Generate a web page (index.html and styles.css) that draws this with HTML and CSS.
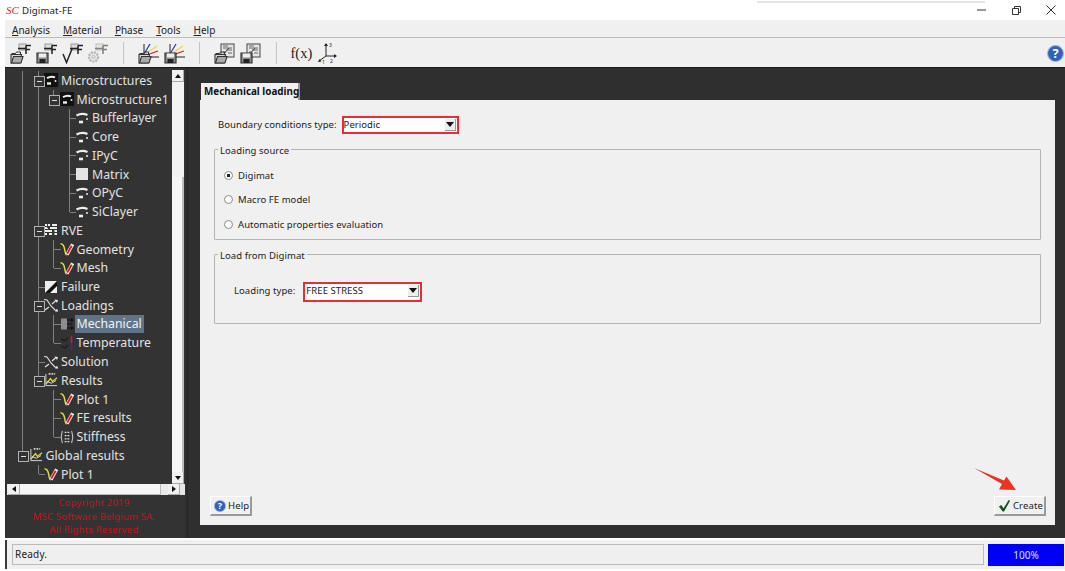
FILE: index.html
```html
<!DOCTYPE html>
<html lang="en">
<head>
<meta charset="utf-8">
<title>Digimat-FE</title>
<link rel="stylesheet" href="styles.css">
</head>
<body>
<svg class="defs" width="0" height="0" aria-hidden="true">
  <defs>
    <symbol id="i-ms" viewBox="0 0 14 14"><rect width="14" height="14" fill="#111"/><path d="M3 5.200Q7 2.600 11 4.400" stroke="#eee" stroke-width="2" fill="none"/><circle cx="11.500" cy="8" r="1" fill="#eee"/><path d="M3 10.500h4" stroke="#eee" stroke-width="2.400"/></symbol>
    <symbol id="i-ph" viewBox="0 0 14 14"><path d="M1.500 4.500Q7 1.600 12.500 4" stroke="#eee" stroke-width="2.200" fill="none"/><circle cx="12" cy="8" r="1" fill="#eee"/><path d="M4 11h4" stroke="#eee" stroke-width="2.600"/></symbol>
    <symbol id="i-mat" viewBox="0 0 14 14"><rect x="1" y="1" width="12" height="12" fill="#e4e4e4"/></symbol>
    <symbol id="i-rve" viewBox="0 0 14 14"><path d="M1 2h5M8 2h5M1 5h3M6 5h7M1 8h7M10 8h3M1 11h2M5 11h3M10 11h3" stroke="#eee" stroke-width="2"/><path d="M3.500 1v4M10 6v6" stroke="#444"/></symbol>
    <symbol id="i-v" viewBox="0 0 15 15"><path d="M0.500 2Q4 2 5 8T7 14" stroke="#e8d93a" stroke-width="1.600" fill="none"/><path d="M7.500 13.500L13.500 2.500" stroke="#f0f0f0" stroke-width="3.600"/><path d="M7.800 12.500L12.500 4" stroke="#e01818" stroke-width="2"/></symbol>
    <symbol id="i-fail" viewBox="0 0 14 14"><rect x="1" y="1" width="12" height="12" fill="#eee"/><path d="M1 13L13 1V6L6 13Z" fill="#111"/></symbol>
    <symbol id="i-load" viewBox="0 0 14 14"><path d="M0 1.500L3 2 7 8 11 12 14 13M1 12L5 9M8 6L12 2.500" stroke="#e6e6e6" stroke-width="1.100" fill="none"/><path d="M14 2L10.500 1.500 13 5ZM11 13.500L14 13.500 13 10.500Z" fill="#e6e6e6"/></symbol>
    <symbol id="i-mech" viewBox="0 0 14 14"><rect x="1" y="1.500" width="6" height="11" fill="#8d8d8d"/><path d="M7 3h5M7 7h5M7 11h5" stroke="#111" stroke-width="1"/><path d="M14 3l-3-2v4zM14 11l-3-2v4z" fill="#111"/></symbol>
    <symbol id="i-temp" viewBox="0 0 14 14"><path d="M1 3L5 5 8 2M1 10L5 12 8 9" stroke="#1a1a1a" stroke-width="1.200" fill="none"/><path d="M11.500 0v7" stroke="#d01a30" stroke-width="1.500"/><path d="M11.500 7v7" stroke="#5a1aa0" stroke-width="1.500"/></symbol>
    <symbol id="i-res" viewBox="0 0 15 15"><path d="M2 1V13.500H14" stroke="#ddd" fill="none"/><path d="M2 12L7 6 9 9 14 5" stroke="#e8d93a" stroke-width="1.400" fill="none"/><path d="M3 9L8 11 13 8" stroke="#ddd" fill="none"/><path d="M5 1h7" stroke="#ccc" stroke-dasharray="2 1" stroke-width="2"/></symbol>
    <symbol id="i-stiff" viewBox="0 0 15 15"><path d="M2.500 1Q0 7.500 2.500 14M12.500 1Q15 7.500 12.500 14" stroke="#ddd" fill="none"/><path d="M5 2.500h2M8 2.500h2M5 6h2M8 6h2M5 9.500h2M8 9.500h2M5 12.500h2M8 12.500h2" stroke="#ddd" stroke-width="1.400"/></symbol>
    <symbol id="t-open" viewBox="0 0 21 21"><path d="M1.500 10.500h4l1-1.500h4v2.500" fill="none" stroke="#333"/><path d="M1 20V11.500H11.500L10 20Z" fill="#d9d9d9" stroke="#333" stroke-width="1.100"/><path d="M3.500 13.500H13L11 20H1.500Z" fill="#aaa" stroke="#333" stroke-width="1.100"/></symbol>
    <symbol id="t-save" viewBox="0 0 21 21"><path d="M1 10H12V20H1Z" fill="#8c8c8c" stroke="#333" stroke-width="1.200"/><rect x="3" y="10.500" width="7" height="4" fill="#eee"/><rect x="3.500" y="16" width="6" height="4" fill="#222"/></symbol>
    <symbol id="t-fe" viewBox="0 0 21 21"><rect x="9" y="1" width="7" height="6" fill="#ddd" stroke="#999"/><path d="M16 2.500V11M16 2.500h5M16 6.500h4M8 5.500h8" stroke="#222" stroke-width="1.500" fill="none"/></symbol>
    <symbol id="t-check" viewBox="0 0 21 21"><path d="M1 11L4.500 19.500 10 6" stroke="#222" stroke-width="1.500" fill="none"/></symbol>
    <symbol id="t-gear" viewBox="0 0 21 21"><circle cx="6.500" cy="14" r="4.500" fill="none" stroke="#888" stroke-width="2.400" stroke-dasharray="2 1"/><circle cx="6.500" cy="14" r="1.700" fill="#ddd" stroke="#888"/></symbol>
    <symbol id="t-curves" viewBox="0 0 21 21"><path d="M6 1V14H21" stroke="#222" fill="none"/><path d="M6 11L12 1" stroke="#2b3cc0" stroke-width="1.300"/><path d="M6 12L19 3" stroke="#e8d93a" stroke-width="1.300"/><path d="M6 13L20 8" stroke="#d81c1c" stroke-width="1.300"/></symbol>
    <symbol id="t-grid" viewBox="0 0 21 21"><rect x="7" y="1" width="13" height="13" fill="#e6e6e6" stroke="#555" stroke-width="1.100"/><path d="M9 3h5M9 5h9M12 7h6M9 9h3M14 10h4" stroke="#666"/><path d="M9 12L15 5" stroke="#444"/></symbol>
    <symbol id="t-axes" viewBox="0 0 22 22"><path d="M10 14V3M10 14H20M10 14L3 19" stroke="#222" fill="none"/><path d="M10 1l-2 3h4zM21 14l-3-2v4zM2 20l3.500-.5-2-2.500z" fill="#222"/><text x="13" y="5" class="ax">3</text><text x="14" y="20.500" class="ax">2</text><text x="6" y="22" class="ax">1</text></symbol>
    <symbol id="i-help" viewBox="0 0 16 16"><circle cx="8" cy="8" r="7.500" fill="#2f62b8" stroke="#9db7de"/><text x="8" y="12.500" text-anchor="middle" class="qm">?</text></symbol>
  </defs>
</svg>

<header class="titlebar">
  <span class="logo">SC</span>
  <span class="app-title">Digimat-FE</span>
  <div class="winctl">
    <svg class="wc" viewBox="0 0 12 12"><path d="M2 6h9" stroke="#333"/></svg>
    <svg class="wc" viewBox="0 0 12 12"><path d="M2.500 4.500h6v6h-6zM4.500 4.500v-2h6v6h-2" stroke="#333" fill="none"/></svg>
    <svg class="wc" viewBox="0 0 12 12"><path d="M1.500 1.500l9 9M10.500 1.500l-9 9" stroke="#333"/></svg>
  </div>
</header>

<div class="app">
  <nav class="menubar">
    <span class="menu"><u>A</u>nalysis</span>
    <span class="menu"><u>M</u>aterial</span>
    <span class="menu"><u>P</u>hase</span>
    <span class="menu"><u>T</u>ools</span>
    <span class="menu"><u>H</u>elp</span>
  </nav>

  <div class="toolbar">
    <span class="tool"><svg><use href="#t-fe"/><use href="#t-open"/></svg></span>
    <span class="tool"><svg><use href="#t-fe"/><use href="#t-save"/></svg></span>
    <span class="tool"><svg><use href="#t-fe"/><use href="#t-check"/></svg></span>
    <span class="tool faded"><svg><use href="#t-fe"/><use href="#t-gear"/></svg></span>
    <span class="tsep"></span>
    <span class="tool"><svg><use href="#t-curves"/><use href="#t-open"/></svg></span>
    <span class="tool"><svg><use href="#t-curves"/><use href="#t-save"/></svg></span>
    <span class="tsep"></span>
    <span class="tool"><svg><use href="#t-grid"/><use href="#t-open"/></svg></span>
    <span class="tool"><svg><use href="#t-grid"/><use href="#t-save"/></svg></span>
    <span class="tsep"></span>
    <span class="tool fx">f(x)</span>
    <span class="tool"><svg class="axes" viewBox="0 0 22 22"><use href="#t-axes"/></svg></span>
    <svg class="tb-help"><use href="#i-help"/></svg>
  </div>

  <main class="workspace">
    <aside class="side">
      <div class="tree-wrap">
        <div class="tree">
          <div class="row"><i class="c on"></i><i class="c on exp"></i><svg class="ic"><use href="#i-ms"/></svg><span>Microstructures</span></div>
          <div class="row"><i class="c on"></i><i class="c on"></i><i class="c exp line-up"></i><svg class="ic"><use href="#i-ms"/></svg><span>Microstructure1</span></div>
          <div class="row"><i class="c on"></i><i class="c on"></i><i class="c"></i><i class="c tee"></i><svg class="ic"><use href="#i-ph"/></svg><span>Bufferlayer</span></div>
          <div class="row"><i class="c on"></i><i class="c on"></i><i class="c"></i><i class="c tee"></i><svg class="ic"><use href="#i-ph"/></svg><span>Core</span></div>
          <div class="row"><i class="c on"></i><i class="c on"></i><i class="c"></i><i class="c tee"></i><svg class="ic"><use href="#i-ph"/></svg><span>IPyC</span></div>
          <div class="row"><i class="c on"></i><i class="c on"></i><i class="c"></i><i class="c tee"></i><svg class="ic"><use href="#i-mat"/></svg><span>Matrix</span></div>
          <div class="row"><i class="c on"></i><i class="c on"></i><i class="c"></i><i class="c tee"></i><svg class="ic"><use href="#i-ph"/></svg><span>OPyC</span></div>
          <div class="row"><i class="c on"></i><i class="c on"></i><i class="c"></i><i class="c ell"></i><svg class="ic"><use href="#i-ph"/></svg><span>SiClayer</span></div>
          <div class="row"><i class="c on"></i><i class="c on exp"></i><svg class="ic"><use href="#i-rve"/></svg><span>RVE</span></div>
          <div class="row"><i class="c on"></i><i class="c on"></i><i class="c tee"></i><svg class="ic"><use href="#i-v"/></svg><span>Geometry</span></div>
          <div class="row"><i class="c on"></i><i class="c on"></i><i class="c ell"></i><svg class="ic"><use href="#i-v"/></svg><span>Mesh</span></div>
          <div class="row"><i class="c on"></i><i class="c tee"></i><svg class="ic"><use href="#i-fail"/></svg><span>Failure</span></div>
          <div class="row"><i class="c on"></i><i class="c on exp"></i><svg class="ic"><use href="#i-load"/></svg><span>Loadings</span></div>
          <div class="row"><i class="c on"></i><i class="c on"></i><i class="c tee"></i><svg class="ic"><use href="#i-mech"/></svg><span class="sel">Mechanical</span></div>
          <div class="row"><i class="c on"></i><i class="c on"></i><i class="c ell"></i><svg class="ic"><use href="#i-temp"/></svg><span>Temperature</span></div>
          <div class="row"><i class="c on"></i><i class="c tee"></i><svg class="ic"><use href="#i-load"/></svg><span>Solution</span></div>
          <div class="row"><i class="c on"></i><i class="c exp line-up"></i><svg class="ic"><use href="#i-res"/></svg><span>Results</span></div>
          <div class="row"><i class="c on"></i><i class="c"></i><i class="c tee"></i><svg class="ic"><use href="#i-v"/></svg><span>Plot 1</span></div>
          <div class="row"><i class="c on"></i><i class="c"></i><i class="c tee"></i><svg class="ic"><use href="#i-v"/></svg><span>FE results</span></div>
          <div class="row"><i class="c on"></i><i class="c"></i><i class="c ell"></i><svg class="ic"><use href="#i-stiff"/></svg><span>Stiffness</span></div>
          <div class="row"><i class="c exp line-up"></i><svg class="ic"><use href="#i-res"/></svg><span>Global results</span></div>
          <div class="row"><i class="c"></i><i class="c ell"></i><svg class="ic"><use href="#i-v"/></svg><span>Plot 1</span></div>
        </div>
        <div class="vscroll">
          <span class="sbtn up"></span>
          <span class="vtrack"><span class="vthumb"></span></span>
          <span class="sbtn down"></span>
        </div>
      </div>
      <div class="hscroll">
        <span class="sbtn left"></span>
        <span class="hthumb"></span>
        <span class="sbtn right"></span>
        <span class="corner"></span>
      </div>
      <footer class="copyright">
        <p>Copyright 2019</p>
        <p>MSC Software Belgium SA.</p>
        <p>All Rights Reserved</p>
      </footer>
    </aside>

    <section class="content">
      <div class="tabs"><span class="tab">Mechanical loading</span></div>
      <div class="form">
        <div class="field">
          <label>Boundary conditions type:</label>
          <span class="select s1">Periodic<span class="sel-btn"></span></span>
        </div>
        <fieldset class="group g1">
          <legend>Loading source</legend>
          <div class="radio checked">Digimat</div>
          <div class="radio">Macro FE model</div>
          <div class="radio">Automatic properties evaluation</div>
        </fieldset>
        <fieldset class="group g2">
          <legend>Load from Digimat</legend>
          <div class="field inner">
            <label>Loading type:</label>
            <span class="select s2">FREE STRESS<span class="sel-btn"></span></span>
          </div>
        </fieldset>
        <div class="actions">
          <span class="btn"><svg class="bi"><use href="#i-help"/></svg>Help</span>
          <span class="btn create"><svg class="bi check" viewBox="0 0 14 14"><path d="M1 8l2.500-1.500L6 10 11.500 1 13 2 6.500 13.500H5Z" fill="#14511e"/></svg>Create</span>
        </div>
        <svg class="annot" viewBox="0 0 46 26"><path d="M2 2L32 14.500 34.500 10.500 44 24 27 23.500 30 18Z" fill="#ea3323"/></svg>
      </div>
    </section>
  </main>

  <div class="statusbar">
    <span class="status">Ready.</span>
    <span class="progress">100%</span>
  </div>
</div>
</body>
</html>
```
FILE: styles.css
```css
* { box-sizing: border-box; }
html, body { margin: 0; padding: 0; }
body {
  width: 1065px;
  height: 571px;
  overflow: hidden;
  background: #fff;
  font-family: "Noto Sans", "Open Sans", sans-serif;
  color: #222;
}
.defs { display: block; height: 0; }
.ax { font: 5px "Noto Sans", sans-serif; fill: #222; }
.qm { font: bold 12px "Noto Sans", sans-serif; fill: #fff; }

.titlebar { position: relative; height: 20px; display: flex; align-items: center; padding-left: 6px; background: #fff; }
.titlebar::before { content: ""; position: absolute; left: 757px; width: 228px; top: 1px; height: 2px; background: #e4e4e4; }
.logo { color: #d32a1e; font: italic 11px "Liberation Serif", serif; width: 16px; }
.app-title { font-size: 9.700px; letter-spacing: .1px; color: #222; }
.winctl { margin-left: auto; display: flex; gap: 23px; padding-right: 8px; }
.wc { width: 12px; height: 12px; display: block; }

.app { margin-left: 5px; height: 549px; display: flex; flex-direction: column; }

.menubar { height: 18px; display: flex; background: #f0f0f0; padding: 2px 0 0 7px; gap: 13px; align-items: center; font-size: 10px; border-bottom: 1px solid #bdbdbd; }

.toolbar { height: 29px; background: #f0f0f0; display: flex; align-items: center; padding-left: 3px; padding-top: 1px; }
.tool { width: 25.700px; height: 24px; display: flex; align-items: center; justify-content: center; flex: none; }
.tool svg { width: 21px; height: 21px; display: block; }
.tool .axes { width: 22px; height: 22px; }
.tool.faded { opacity: .55; }
.tsep { width: 1px; height: 22px; background: #c4c4c4; margin: 0 12px; flex: none; }
.fx { font: 14.500px "Liberation Serif", serif; color: #222; }
.tb-help { width: 17px; height: 17px; margin-left: auto; margin-right: 1px; }

.workspace { height: 471px; background: #2f2f2f; display: flex; border-top: 1px solid #1c1c1c; padding-left: 2px; }

.side { width: 178px; display: flex; flex-direction: column; flex: none; background: #333; }
.tree-wrap { height: 416px; display: flex; padding-top: 3px; }
.tree { width: 165px; overflow: hidden; padding-left: 8px; flex: none; }
.row { height: 18.750px; display: flex; align-items: center; color: #e2e2e2; font-size: 12.300px; white-space: nowrap; }
.row span { margin-left: 2px; line-height: 17px; padding: 0 1px; }
.row .sel { background: #5f7488; color: #eef2f5; margin-left: 1px; padding: 0 2px; line-height: 18px; }
.ic { width: 14px; height: 14px; flex: none; margin-left: -2px; }

.c { width: 15.500px; height: 100%; flex: none; position: relative; display: block; }
.c.on::before, .tee::before, .ell::before, .line-up::before {
  content: ""; position: absolute; left: 7px; top: 0; bottom: 0; border-left: 1px solid #808080;
}
.ell::before, .line-up::before { bottom: 50%; }
.tee::after, .ell::after {
  content: ""; position: absolute; left: 8px; right: 1px; top: 50%; border-top: 1px solid #808080;
}
.exp::after {
  content: ""; position: absolute; left: 3px; top: 5px; width: 9px; height: 9px;
  border: 1px solid #b0b0b0;
  background: linear-gradient(#ddd, #ddd) center / 5px 1px no-repeat, #333;
}

.vscroll { width: 12px; margin-top: -1px; display: flex; flex-direction: column; background: #f3f3f3; }
.vtrack { flex: 1; display: flex; flex-direction: column; justify-content: flex-end; }
.vthumb { height: 295px; background: #f7f7f7; border-right: 2px solid #bdbdbd; }
.sbtn { width: 12px; height: 12px; background: #f0f0f0; display: flex; align-items: center; justify-content: center; flex: none; border-right: 1px solid #aaa; border-bottom: 1px solid #aaa; }
.sbtn::before { content: ""; width: 0; height: 0; border: 3.500px solid transparent; }
.up::before { border-bottom: 4px solid #111; border-top-width: 0; }
.down::before { border-top: 4px solid #111; border-bottom-width: 0; }
.left::before { border-right: 4px solid #111; border-left-width: 0; }
.right::before { border-left: 4px solid #111; border-right-width: 0; }

.hscroll { height: 11px; display: flex; background: #eaeaea; padding-left: 1px; }
.hscroll .sbtn { height: 11px; }
.hthumb { width: 141px; background: #f6f6f6; border-bottom: 1px solid #bbb; border-right: 1px solid #bbb; margin-right: 7px; }
.corner { flex: 1; background: #e6e6e6; }

.copyright { flex: 1; color: #c8101a; font-size: 9.500px; text-align: center; padding: 1px 4px 0 0; }
.copyright p { margin: 0; height: 13.500px; line-height: 13.500px; letter-spacing: .2px; }

.content { flex: 1; margin-left: 2px; background: #2f2f2f; border-left: 1px solid #252525; padding: 15px 10px 13px 12px; display: flex; flex-direction: column; }
.tabs { height: 17px; flex: none; display: flex; }
.tab { height: 17px; width: 99px; margin-left: 1px; background: #f0f0f0; font-size: 9.850px; font-weight: 700; color: #111; line-height: 17px; padding-left: 3px; border-right: 2px solid #999; white-space: nowrap; }
.form { flex: 1; position: relative; background: #f0f0f0; padding: 16px 14px 9px 14px; display: flex; flex-direction: column; font-size: 9.500px; letter-spacing: .06px; }

.field { display: flex; align-items: center; padding-left: 4px; height: 18px; }
.field label { margin: 0 5px 2px 0; }
.select { background: #fff; border: 2px solid #e62e38; display: flex; align-items: center; height: 18px; padding: 0 0 1px 0; }
.s1 { width: 117px; }
.s2 { width: 119px; height: 20px; padding: 0 0 3px 1px; }
.sel-btn { margin-left: auto; margin-right: 1px; width: 11px; height: 12px; background: #eee; border-right: 1px solid #999; border-bottom: 1px solid #999; display: flex; align-items: center; justify-content: center; }
.sel-btn::before { content: ""; border: 4px solid transparent; border-top: 5px solid #111; border-bottom-width: 0; }

.group { margin: 0; min-width: 0; border: 1px solid #b4b4b4; border-radius: 1px; padding: 0; }
.group legend { padding: 4px 2px 0; line-height: 12px; }
.g1 { margin-top: 7px; height: 99px; padding: 6px 0 0 9px; }
.g1 legend { margin-left: -6px; }
.g2 { margin-top: 6px; height: 78px; padding: 20px 0 0 15px; }
.g2 legend { margin-left: -12px; }
.inner { height: 20px; }
.inner label { margin: 0 8px 4px 0; }

.radio { height: 24.500px; display: flex; align-items: center; gap: 5px; }
.radio::before { content: ""; width: 7px; height: 7px; border-radius: 50%; background: #fff; border: 1px solid #8a8a8a; flex: none; }
.radio.checked::before { background: radial-gradient(circle, #222 0 1.500px, #fff 2px); }

.actions { margin: auto -14px 0; display: flex; justify-content: space-between; padding: 0 9px 0 10px; }
.btn { height: 20px; display: inline-flex; align-items: center; gap: 2px; padding: 0 1px 0 3px; background: #f0f0f0; border-top: 1px solid #fff; border-left: 1px solid #fff; border-right: 2px solid #999; border-bottom: 2px solid #999; letter-spacing: .15px; }
.bi { width: 12px; height: 12px; flex: none; }
.check { width: 13px; height: 13px; }
.annot { position: absolute; left: 772px; top: 366px; width: 46px; height: 26px; }

.statusbar { height: 29px; display: flex; align-items: center; background: #f0f0f0; padding: 0 1px 0 5px; margin-top: 2px; gap: 4px; border-left: 2px solid #3a3a3a; }
.status { flex: none; width: 972px; height: 21px; border: 1px solid #bcbcbc; background: #efefef; font-size: 10px; letter-spacing: .2px; line-height: 19px; padding-left: 2px; }
.progress { width: 76px; height: 22px; background: #0000f5; color: #dfe0ff; font-size: 10px; text-align: center; line-height: 22px; }
```
